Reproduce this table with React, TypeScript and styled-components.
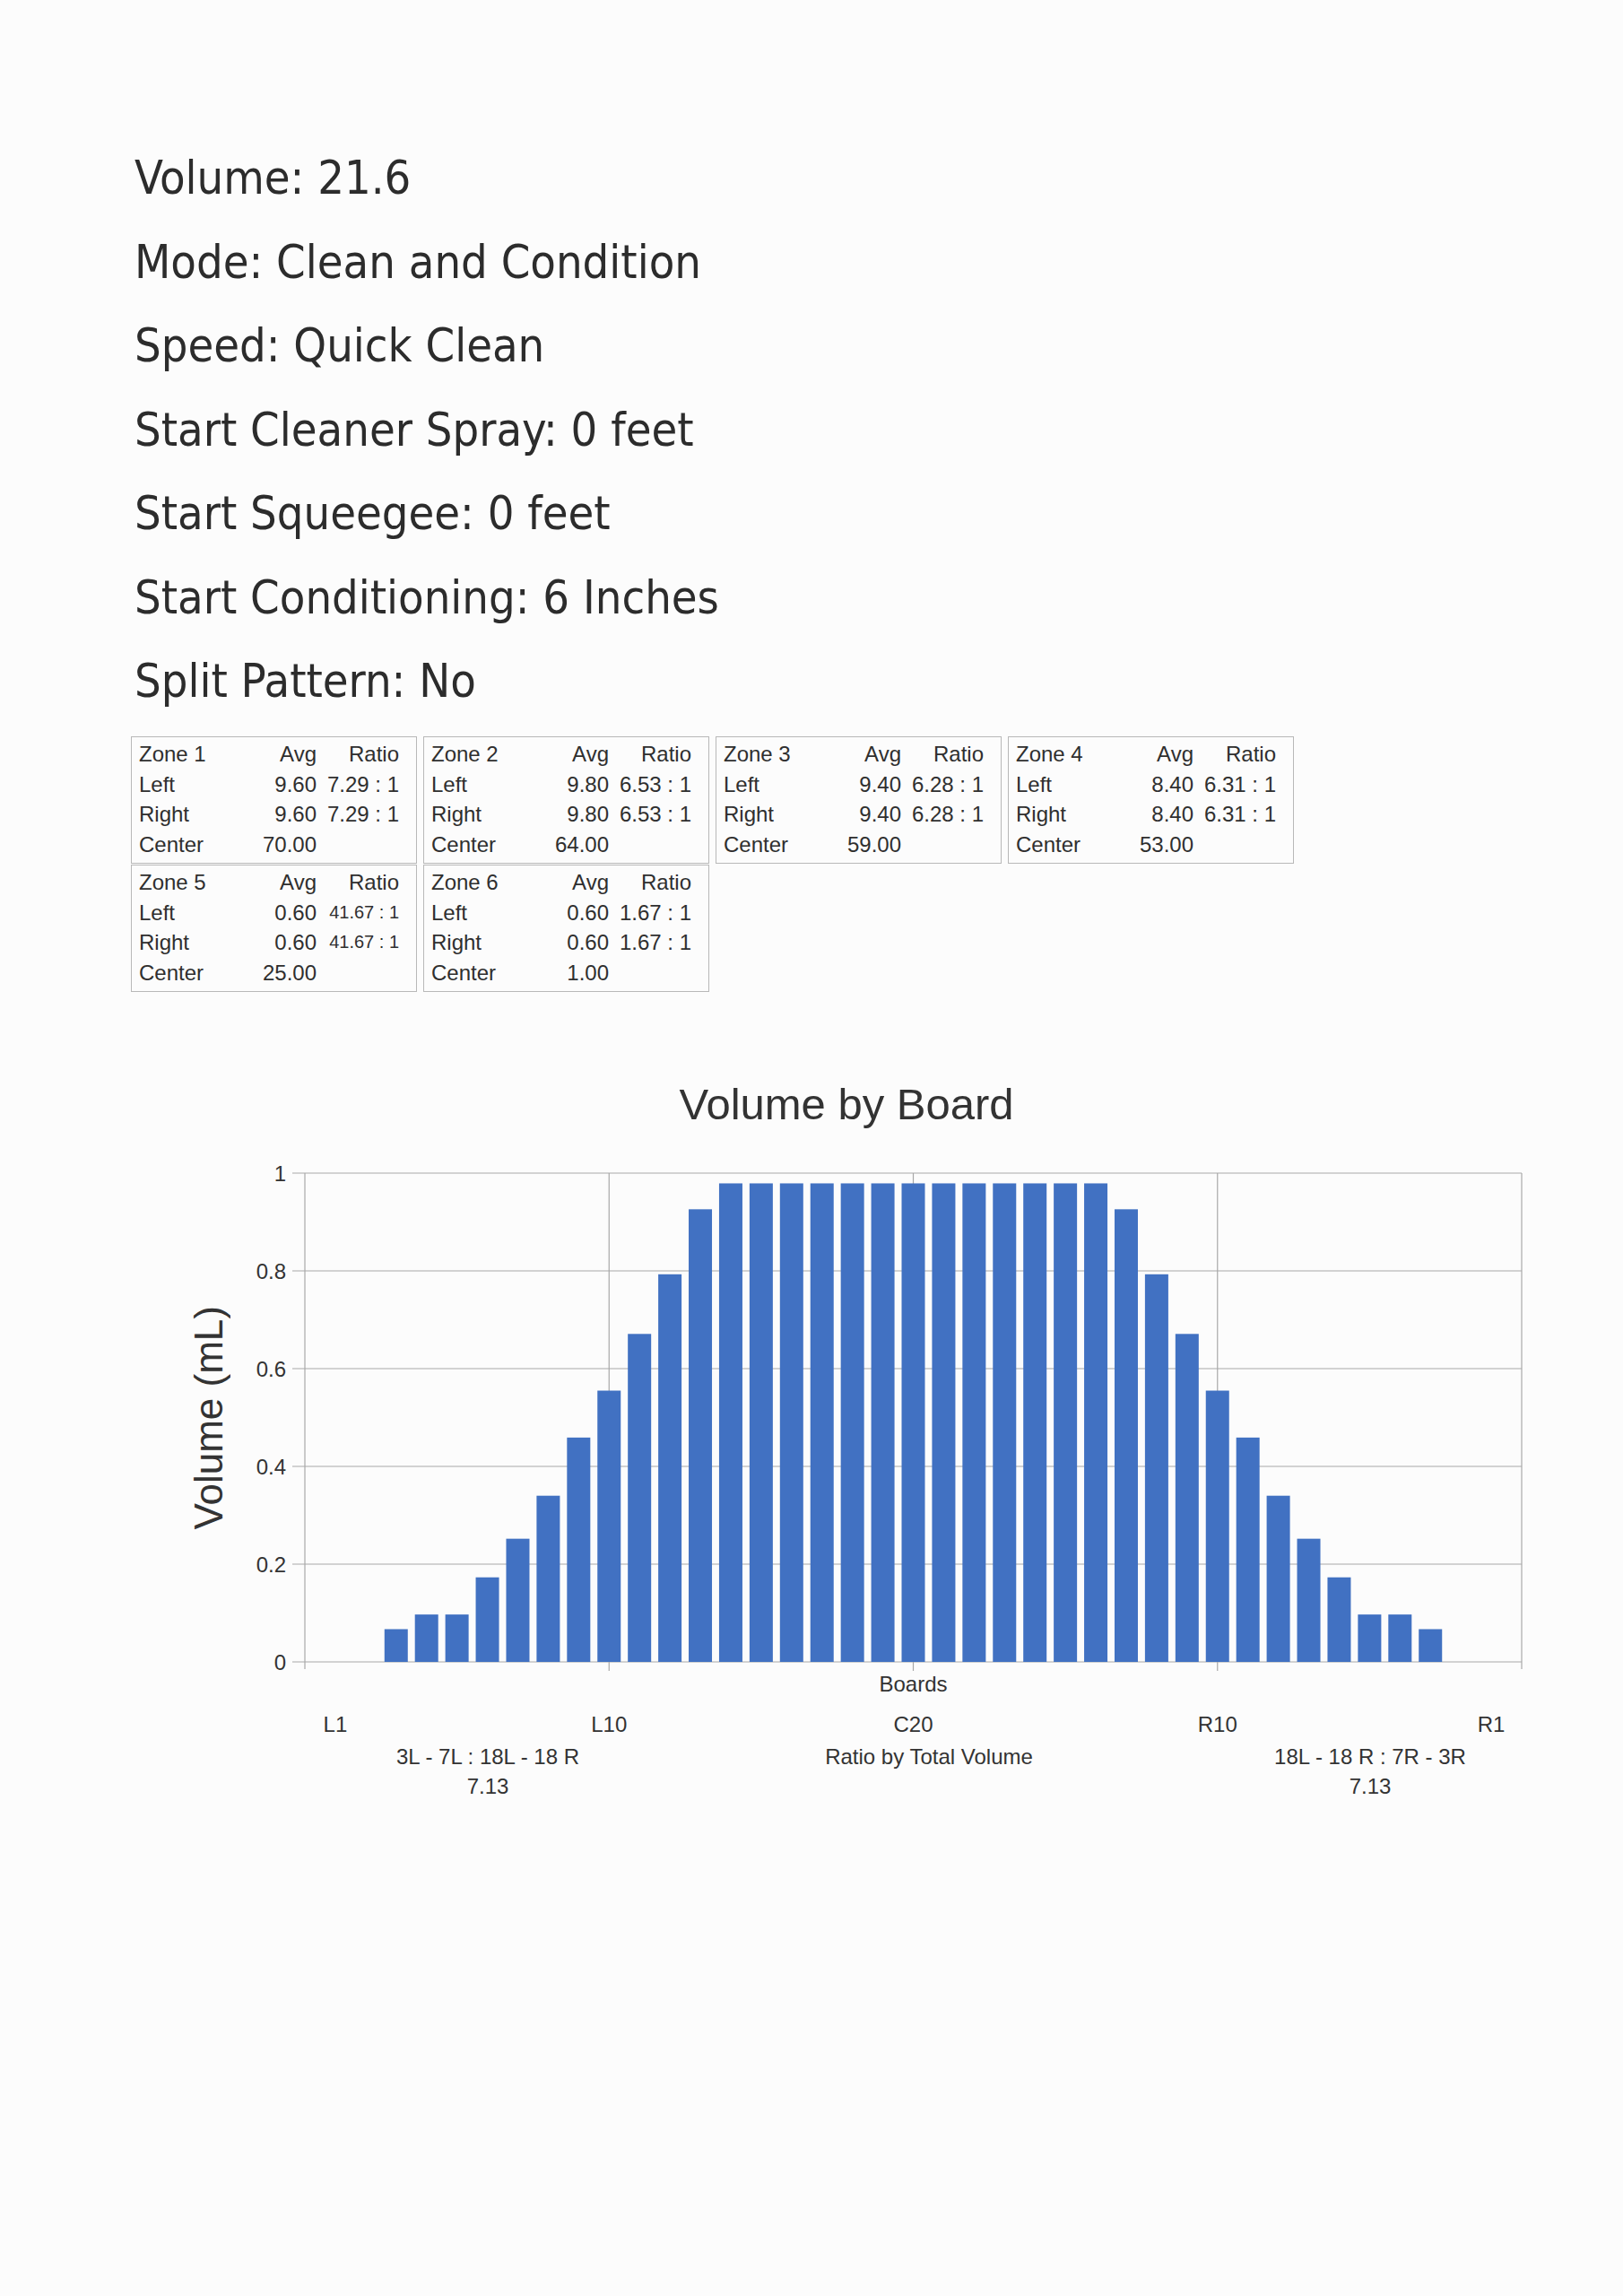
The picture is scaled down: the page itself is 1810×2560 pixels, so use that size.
import React from 'react';
import styled, { createGlobalStyle } from 'styled-components';

const GlobalStyle = createGlobalStyle`
  body {
    margin: 0;
    background: #fcfcfc;
    color: #333;
  }
`;

const Page = styled.div`
  padding: 152px 0 0 146px;
`;

const InfoList = styled.div`
  margin-left: 4px;
  font-family: "DejaVu Sans Condensed", "DejaVu Sans", sans-serif;
  font-stretch: condensed;
  font-size: 52px;
  line-height: 93.5px;
  color: #2c2c2c;
`;

const InfoLine = styled.div`
  white-space: nowrap;
`;

const ZoneGrid = styled.div`
  margin-top: 14.5px;
  display: grid;
  grid-template-columns: repeat(4, 319px);
  column-gap: 7px;
  row-gap: 1px;
`;

const ZoneBox = styled.div`
  border: 1px solid #b8b8b8;
  padding: 2px 19px 4px 8px;
  display: grid;
  grid-template-columns: 1fr 90px 92px;
  font-family: "Liberation Sans", Arial, sans-serif;
  font-size: 24px;
  line-height: 33.5px;
  color: #2f2f2f;
`;

const Cell = styled.span<{ $right?: boolean; $small?: boolean }>`
  text-align: ${(p) => (p.$right ? 'right' : 'left')};
  font-size: ${(p) => (p.$small ? '20px' : '24px')};
  white-space: nowrap;
`;

const ChartSection = styled.div`
  margin: 96.6px 0 0 62px;
  width: 1472px;
  font-family: "Liberation Sans", Arial, sans-serif;
  color: #333;
`;

const ChartTitle = styled.div`
  text-align: center;
  font-size: 49px;
  line-height: 57px;
`;

const ChartBody = styled.div`
  margin-top: 30.4px;
  display: flex;
  align-items: flex-start;
`;

const YAxisCell = styled.div`
  flex-shrink: 0;
  width: 62px;
  height: 545px;
  margin-top: 18px;
  display: flex;
  align-items: center;
`;

const YTitle = styled.span`
  writing-mode: vertical-rl;
  transform: rotate(180deg);
  font-size: 44px;
  line-height: 50px;
  white-space: nowrap;
`;

const Plot = styled.svg`
  display: block;
  flex-shrink: 0;
  overflow: visible;
`;

const Footer = styled.div`
  margin: 2px 0 0 90px;
  display: grid;
  grid-template-columns: repeat(3, 492px);
  font-size: 24px;
  line-height: 33px;
  text-align: center;
`;

const FooterCol = styled.div`
  display: flex;
  flex-direction: column;
`;

type ZoneRow = { avg: string; ratio: string; small?: boolean };
type Zone = { name: string; left: ZoneRow; right: ZoneRow; center: string };

const zones: Zone[] = [
  { name: 'Zone 1', left: { avg: '9.60', ratio: '7.29 : 1' }, right: { avg: '9.60', ratio: '7.29 : 1' }, center: '70.00' },
  { name: 'Zone 2', left: { avg: '9.80', ratio: '6.53 : 1' }, right: { avg: '9.80', ratio: '6.53 : 1' }, center: '64.00' },
  { name: 'Zone 3', left: { avg: '9.40', ratio: '6.28 : 1' }, right: { avg: '9.40', ratio: '6.28 : 1' }, center: '59.00' },
  { name: 'Zone 4', left: { avg: '8.40', ratio: '6.31 : 1' }, right: { avg: '8.40', ratio: '6.31 : 1' }, center: '53.00' },
  { name: 'Zone 5', left: { avg: '0.60', ratio: '41.67 : 1', small: true }, right: { avg: '0.60', ratio: '41.67 : 1', small: true }, center: '25.00' },
  { name: 'Zone 6', left: { avg: '0.60', ratio: '1.67 : 1' }, right: { avg: '0.60', ratio: '1.67 : 1' }, center: '1.00' },
];

const info = [
  'Volume: 21.6',
  'Mode: Clean and Condition',
  'Speed: Quick Clean',
  'Start Cleaner Spray: 0 feet',
  'Start Squeegee: 0 feet',
  'Start Conditioning: 6 Inches',
  'Split Pattern: No',
];

// boards 3..13, mirrored for 27..37, flat top in between
const rampUp = [0.067, 0.097, 0.097, 0.173, 0.252, 0.34, 0.459, 0.555, 0.671, 0.793, 0.926];
const volumes = [...rampUp, ...Array(13).fill(0.979), ...[...rampUp].reverse()];

const W = 1450;
const H = 650;
const left = 70;
const right = 1427;
const top = 18;
const bottom = 563;
const slot = (right - left) / 40;
const barW = 26;
const yAt = (v: number) => bottom - v * (bottom - top);
const xAt = (board: number) => left + board * slot;

const boardLabels: [number, string][] = [
  [1, 'L1'],
  [10, 'L10'],
  [20, 'C20'],
  [30, 'R10'],
  [39, 'R1'],
];

const ZoneTable = ({ zone }: { zone: Zone }) => (
  <ZoneBox>
    <Cell>{zone.name}</Cell>
    <Cell $right>Avg</Cell>
    <Cell $right>Ratio</Cell>
    <Cell>Left</Cell>
    <Cell $right>{zone.left.avg}</Cell>
    <Cell $right $small={zone.left.small}>{zone.left.ratio}</Cell>
    <Cell>Right</Cell>
    <Cell $right>{zone.right.avg}</Cell>
    <Cell $right $small={zone.right.small}>{zone.right.ratio}</Cell>
    <Cell>Center</Cell>
    <Cell $right>{zone.center}</Cell>
    <Cell />
  </ZoneBox>
);

const VolumeChart = () => (
  <Plot width={W} height={H} viewBox={`0 0 ${W} ${H}`}>
    <g stroke="#a8a8a8" strokeWidth={1.2}>
      {[0, 0.2, 0.4, 0.6, 0.8, 1].map((v) => (
        <line key={v} x1={left - 14} x2={right} y1={yAt(v)} y2={yAt(v)} />
      ))}
      <line x1={left} x2={left} y1={top} y2={bottom + 8} />
      <line x1={right} x2={right} y1={top} y2={bottom + 8} />
      {[10, 20, 30].map((b) => (
        <line key={b} x1={xAt(b)} x2={xAt(b)} y1={top} y2={bottom + 10} />
      ))}
    </g>
    <g fill="#4171c2">
      {volumes.map((v, i) => (
        <rect key={i} x={xAt(i + 3) - barW / 2} y={yAt(v)} width={barW} height={bottom - yAt(v)} />
      ))}
    </g>
    <g fontFamily="Liberation Sans, Arial, sans-serif" fontSize={24} fill="#333">
      {[0, 0.2, 0.4, 0.6, 0.8, 1].map((v) => (
        <text key={v} x={left - 21} y={yAt(v) + 8.6} textAnchor="end">
          {v === 0 || v === 1 ? String(v) : v.toFixed(1)}
        </text>
      ))}
      <text x={xAt(20)} y={595.6} textAnchor="middle">Boards</text>
      {boardLabels.map(([b, label]) => (
        <text key={label} x={xAt(b)} y={640.6} textAnchor="middle">{label}</text>
      ))}
    </g>
  </Plot>
);

const App = () => (
  <>
    <GlobalStyle />
    <Page>
      <InfoList>
        {info.map((line) => (
          <InfoLine key={line}>{line}</InfoLine>
        ))}
      </InfoList>

      <ZoneGrid>
        {zones.map((z) => (
          <ZoneTable key={z.name} zone={z} />
        ))}
      </ZoneGrid>

      <ChartSection>
        <ChartTitle>Volume by Board</ChartTitle>
        <ChartBody>
          <YAxisCell>
            <YTitle>Volume (mL)</YTitle>
          </YAxisCell>
          <VolumeChart />
        </ChartBody>
        <Footer>
          <FooterCol>
            <span>3L - 7L : 18L - 18 R</span>
            <span>7.13</span>
          </FooterCol>
          <FooterCol>
            <span>Ratio by Total Volume</span>
          </FooterCol>
          <FooterCol>
            <span>18L - 18 R : 7R - 3R</span>
            <span>7.13</span>
          </FooterCol>
        </Footer>
      </ChartSection>
    </Page>
  </>
);

export default App;
